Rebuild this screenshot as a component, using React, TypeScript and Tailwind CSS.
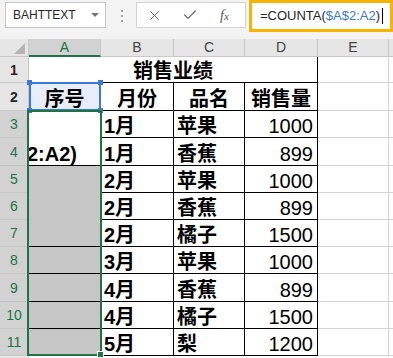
import { X, Check } from "lucide-react";

// column widths: row header, A..E, partial F
const W = ["w-[29px]", "w-[72px]", "w-[73px]", "w-[71px]", "w-[73px]", "w-[71px]", "w-[4px]"];

const rows = [
  { n: 3, h: "h-[27px]", m: "1月", f: "苹果", v: "1000" },
  { n: 4, h: "h-[28px]", m: "1月", f: "香蕉", v: "899" },
  { n: 5, h: "h-[27px]", m: "2月", f: "苹果", v: "1000" },
  { n: 6, h: "h-[27px]", m: "2月", f: "香蕉", v: "899" },
  { n: 7, h: "h-[27px]", m: "2月", f: "橘子", v: "1500" },
  { n: 8, h: "h-[27px]", m: "3月", f: "苹果", v: "1000" },
  { n: 9, h: "h-[28px]", m: "4月", f: "香蕉", v: "899" },
  { n: 10, h: "h-[27px]", m: "4月", f: "橘子", v: "1500" },
  { n: 11, h: "h-[27px]", m: "5月", f: "梨", v: "1200" },
];

// A-column cell look for rows 3..11 (fill + bottom border)
const aCell: Record<number, string> = {
  3: "bg-white border-b-white",
  4: "bg-white border-b-black",
  5: "bg-[#c6c6c6] border-b-[#c6c6c6]",
  6: "bg-[#c6c6c6] border-b-[#c6c6c6]",
  7: "bg-[#c6c6c6] border-b-black",
  8: "bg-[#c6c6c6] border-b-black",
  9: "bg-[#c6c6c6] border-b-black",
  10: "bg-[#c6c6c6] border-b-black",
  11: "bg-[#c6c6c6] border-b-black",
};

const RowHead = ({ n, sel }: { n?: number; sel?: boolean }) => (
  <div
    className={`${W[0]} shrink-0 flex items-center justify-center border-r border-b border-[#c8c8c8] text-[14px] ${
      sel ? "bg-[#d2d2d2] text-[#217346]" : "bg-[#e6e6e6] text-[#262626]"
    }`}
  >
    {n}
  </div>
);

const App = () => {
  return (
    <div className="relative w-[393px] h-[358px] overflow-hidden bg-white font-['Liberation_Sans','Noto_Sans_CJK_SC',sans-serif] text-black">
      {/* formula bar */}
      <div className="h-[39px] bg-[#f3f3f3] flex items-start">
        <div className="ml-[5px] mt-[2px] w-[101px] h-[26px] bg-white border border-[#c6c6c6] flex items-center justify-between pl-[7px] pr-[6px]">
          <span className="text-[12px] text-[#262626]">BAHTTEXT</span>
          <span className="w-0 h-0 border-l-[4px] border-r-[4px] border-t-[4px] border-l-transparent border-r-transparent border-t-[#777]" />
        </div>
        <div className="ml-[15px] mt-[10px] flex flex-col gap-[3px]">
          <span className="w-[2px] h-[2px] bg-[#a6a6a6]" />
          <span className="w-[2px] h-[2px] bg-[#a6a6a6]" />
          <span className="w-[2px] h-[2px] bg-[#a6a6a6]" />
        </div>
        <div className="ml-[13px] mt-[2px] w-[110px] h-[26px] bg-white border border-[#d4d4d4] flex items-center text-[#666]">
          <X size={15} strokeWidth={1.6} className="ml-[10px]" />
          <Check size={16} strokeWidth={1.8} className="ml-[20px]" />
          <span className="ml-[22px] font-['Liberation_Serif',serif] italic text-[14px] text-[#555]">
            f<span className="text-[11px]">x</span>
          </span>
        </div>
        <div className="ml-[3px] flex-1 h-[32px] bg-white border-[3px] border-[#f5b400] flex items-center pl-[8px] text-[13px] text-[#262626]">
          <span>=COUNTA(</span>
          <span className="text-[#3c78d8]">$A$2:A2</span>
          <span>)</span>
          <span className="ml-[2px] w-px h-[16px] bg-black" />
        </div>
      </div>

      {/* column headers */}
      <div className="flex h-[18px] text-[14px] text-[#444]">
        <div className={`${W[0]} shrink-0 flex items-end justify-end pr-[3px] pb-[2px] bg-[#e6e6e6] border-r border-b border-[#c8c8c8]`}>
          <svg width="11" height="11" viewBox="0 0 11 11">
            <path d="M11 0 L11 11 L0 11 Z" fill="#b4b4b4" />
          </svg>
        </div>
        <div className={`${W[1]} shrink-0 flex items-center justify-center bg-[#d2d2d2] border-r border-[#c8c8c8] border-b-2 border-b-[#217346] text-[#217346]`}>A</div>
        {["B", "C", "D", "E"].map((c, i) => (
          <div key={c} className={`${W[i + 2]} shrink-0 flex items-center justify-center bg-[#e6e6e6] border-r border-b border-[#c8c8c8]`}>
            {c}
          </div>
        ))}
        <div className={`${W[6]} shrink-0 bg-[#e6e6e6] border-b border-[#c8c8c8]`} />
      </div>

      {/* row 1 */}
      <div className="flex h-[26px] text-[20px] leading-[20px] font-bold">
        <RowHead n={1} />
        <div className="w-[289px] shrink-0 flex items-end justify-center pb-px border-r border-b border-black">销售业绩</div>
        <div className={`${W[5]} shrink-0 border-r border-b border-[#d4d4d4]`} />
        <div className={`${W[6]} shrink-0 border-b border-[#d4d4d4]`} />
      </div>

      {/* row 2 */}
      <div className="flex h-[28px] text-[20px] leading-[20px] font-bold">
        <RowHead n={2} />
        <div className={`${W[1]} shrink-0 flex items-end justify-center pb-px bg-[#e8eef9] border-r border-b border-black`}>序号</div>
        <div className={`${W[2]} shrink-0 flex items-end justify-center pb-px border-r border-b border-black`}>月份</div>
        <div className={`${W[3]} shrink-0 flex items-end justify-center pb-px border-r border-b border-black`}>品名</div>
        <div className={`${W[4]} shrink-0 flex items-end justify-center pb-px border-r border-b border-black`}>销售量</div>
        <div className={`${W[5]} shrink-0 border-r border-b border-[#d4d4d4]`} />
        <div className={`${W[6]} shrink-0 border-b border-[#d4d4d4]`} />
      </div>

      {/* data rows */}
      {rows.map((r) => (
        <div key={r.n} className={`flex ${r.h} text-[20px] leading-[20px]`}>
          <RowHead n={r.n} sel />
          <div className={`${W[1]} shrink-0 flex items-end justify-end overflow-hidden pr-[23px] pb-px font-bold whitespace-nowrap border-r border-r-black border-b ${aCell[r.n]}`}>
            {r.n === 4 ? "2:A2)" : ""}
          </div>
          <div className={`${W[2]} shrink-0 flex items-end pl-[3px] pb-px font-bold border-r border-b border-black`}>{r.m}</div>
          <div className={`${W[3]} shrink-0 flex items-end pl-[3px] pb-px font-bold border-r border-b border-black`}>{r.f}</div>
          <div className={`${W[4]} shrink-0 flex items-end justify-end pr-[4px] pb-px border-r border-b border-black`}>{r.v}</div>
          <div className={`${W[5]} shrink-0 border-r border-b border-[#d4d4d4]`} />
          <div className={`${W[6]} shrink-0 border-b border-[#d4d4d4]`} />
        </div>
      ))}

      {/* row 12 (partial) */}
      <div className="flex h-[27px]">
        <RowHead />
        <div className="flex-1" />
      </div>

      {/* reference highlight on A2 */}
      <div className="absolute left-[29px] top-[82px] w-[72px] h-[29px] border-2 border-[#3c78d8]" />
      <span className="absolute left-[27px] top-[80px] w-[5px] h-[5px] bg-[#3c78d8]" />
      <span className="absolute left-[98px] top-[80px] w-[5px] h-[5px] bg-[#3c78d8]" />
      <span className="absolute left-[27px] top-[108px] w-[5px] h-[5px] bg-[#3c78d8]" />
      <span className="absolute left-[98px] top-[108px] w-[5px] h-[5px] bg-[#3c78d8]" />

      {/* selection A3:A11 */}
      <div className="absolute left-[27px] top-[110px] w-[75px] h-[246px] border-2 border-[#217346]" />
      <span className="absolute left-[97px] top-[351px] w-[7px] h-[7px] bg-[#217346] border border-white" />
    </div>
  );
};

export default App;
